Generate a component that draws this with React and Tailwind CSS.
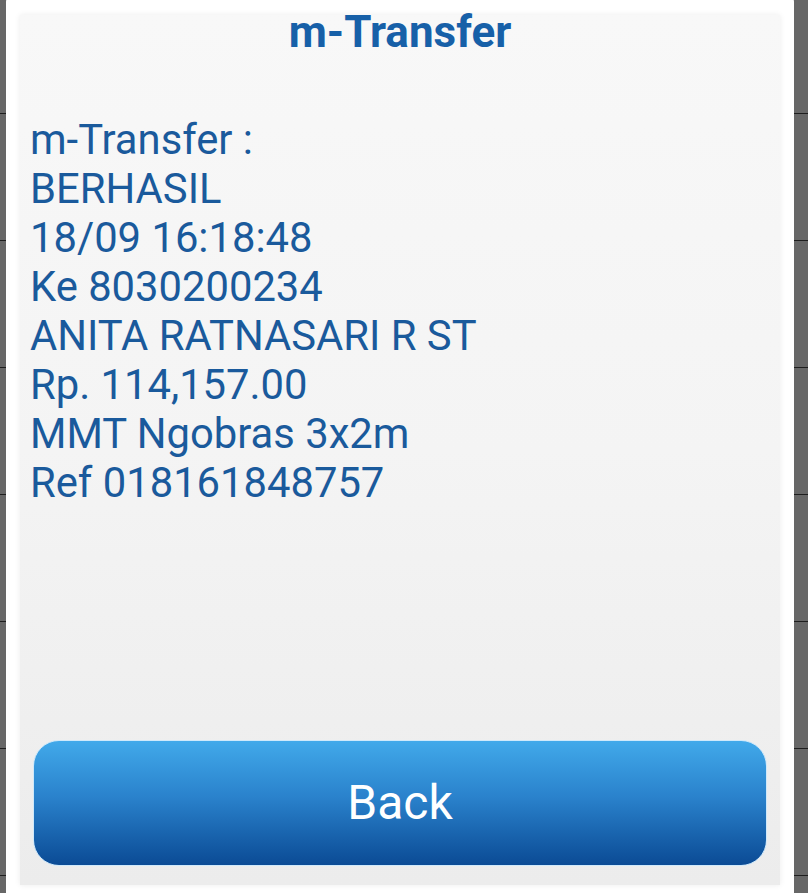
import React from 'react';

const lines = [
  'm-Transfer :',
  'BERHASIL',
  '18/09 16:18:48',
  'Ke 8030200234',
  'ANITA RATNASARI R ST',
  'Rp. 114,157.00',
  'MMT Ngobras 3x2m',
  'Ref 018161848757',
];

export default function App() {
  return (
    <div className="relative w-[808px] h-[893px] overflow-hidden bg-[#676767] font-['Roboto','Liberation_Sans',sans-serif]">
      {/* list rows behind the dialog */}
      <div className="flex flex-col">
        <div className="h-[114px] border-b border-[#1e1e1e]" />
        {[0, 1, 2, 3, 4, 5, 6].map((i) => (
          <div key={i} className="h-[127px] border-b border-[#1e1e1e]" />
        ))}
      </div>

      {/* dialog */}
      <div className="absolute left-[6px] right-[14px] top-[-6px] bottom-[-10px] rounded-[8px] bg-white pt-[21px] px-[14px] pb-[18px]">
        <div className="h-[870px] flex flex-col bg-[linear-gradient(180deg,#f8f8f8_0%,#f4f4f4_50%,#ececec_100%)] shadow-[0_0_6px_rgba(0,0,0,0.08)]">
          <h1 className="text-center text-[44px] leading-[34px] font-bold text-[#1760a8]">
            m-Transfer
          </h1>

          <div className="mt-[66px] px-[10px] text-[41.75px] leading-[49px] text-[#1a5a9c]">
            {lines.map((line) => (
              <div key={line}>{line}</div>
            ))}
          </div>

          <div className="flex-1" />

          <div className="px-[13px] pb-[19px]">
            <button className="w-full h-[126px] rounded-[26px] border border-[#cfe9fb] bg-[linear-gradient(180deg,#41a9ea_0%,#2a82cc_45%,#0b4b95_100%)] text-white text-[48px] leading-none flex items-center justify-center">
              Back
            </button>
          </div>
        </div>
      </div>
    </div>
  );
}
